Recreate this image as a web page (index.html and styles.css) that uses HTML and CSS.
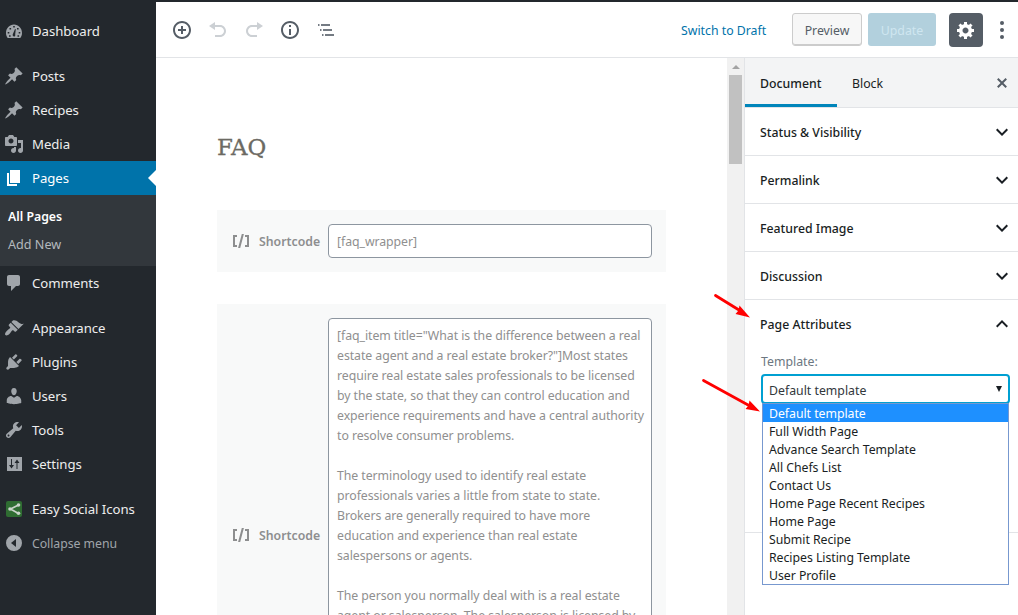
FILE: index.html
```html
<!DOCTYPE html>
<html lang="en">
<head>
<meta charset="utf-8">
<title>Edit Page</title>
<link rel="stylesheet" href="styles.css">
</head>
<body>
<div class="app">
  <nav class="menu">
    <a class="item"><svg class="icon" viewBox="0 0 20 20"><path fill-rule="evenodd" d="M3.76 17h12.48c1.1-1.37 1.76-3.11 1.76-5 0-4.9-3.58-8.5-8-8.5S2 7.100 2 12c0 1.890.66 3.630 1.760 5zM9.200 5h1.600v1.600H9.200zM5.500 7h1.600v1.600H5.500zM13 7h1.600v1.600H13zM3.700 11h1.600v1.600H3.700zM14.700 11h1.600v1.600h-1.600zM5 14.300h1.600v1.500H5zM13.500 14.300h1.600v1.500h-1.600zM11 8l.8.300-.6 5c.4 1.500-.3 2.300-1.200 2.300s-1.700-1.100-1.200-2.300z"/></svg><span>Dashboard</span></a>
    <a class="item gap"><svg class="icon" viewBox="0 0 20 20"><path d="M10.440 3.020l1.820-1.820 6.360 6.350-1.830 1.820c-1.050-.680-2.480-.570-3.410.360l-.750.750c-.920.930-1.040 2.350-.350 3.410l-1.830 1.820-2.410-2.410-2.800 2.790c-.420.420-3.380 2.710-3.800 2.290s1.860-3.390 2.280-3.810l2.790-2.790L4.100 9.360l1.830-1.820c1.050.690 2.480.570 3.400-.360l.750-.750c.930-.920 1.050-2.350.360-3.410z"/></svg><span>Posts</span></a>
    <a class="item"><svg class="icon" viewBox="0 0 20 20"><path d="M10.440 3.020l1.820-1.820 6.360 6.350-1.830 1.820c-1.050-.680-2.480-.570-3.410.360l-.750.750c-.920.930-1.040 2.350-.350 3.410l-1.830 1.820-2.410-2.410-2.800 2.790c-.420.420-3.380 2.710-3.800 2.290s1.860-3.390 2.280-3.810l2.790-2.790L4.100 9.360l1.830-1.820c1.050.690 2.480.570 3.400-.360l.750-.750c.930-.920 1.050-2.350.360-3.410z"/></svg><span>Recipes</span></a>
    <a class="item"><svg class="icon" viewBox="0 0 20 20"><path d="M13 11V4c0-.55-.45-1-1-1h-1.670L9 1H5L3.670 3H2c-.55 0-1 .45-1 1v7c0 .55.45 1 1 1h10c.55 0 1-.45 1-1zM7 4.500c1.380 0 2.500 1.120 2.500 2.500S8.380 9.500 7 9.500 4.500 8.380 4.500 7 5.620 4.500 7 4.500zM14 6h5v10.500c0 1.380-1.120 2.500-2.500 2.500S14 17.880 14 16.500s1.120-2.500 2.500-2.500c.17 0 .34.020.5.050V9h-3V6zm-4 8.050V13h2v3.500c0 1.380-1.120 2.500-2.500 2.500S7 17.880 7 16.500 8.120 14 9.500 14c.17 0 .34.020.5.050z"/></svg><span>Media</span></a>
    <a class="item current"><svg class="icon" viewBox="0 0 20 20"><path d="M6 15V2h10v13H6zm-1 1h8v2H3V5h2v11z"/></svg><span>Pages</span></a>
    <div class="submenu"><a class="on">All Pages</a><a>Add New</a></div>
    <a class="item"><svg class="icon" viewBox="0 0 20 20"><path d="M5 2h9c1.100 0 2 .9 2 2v7c0 1.100-.9 2-2 2h-2l-5 5v-5H5c-1.100 0-2-.9-2-2V4c0-1.100.9-2 2-2z"/></svg><span>Comments</span></a>
    <a class="item gap"><svg class="icon" viewBox="0 0 20 20"><path d="M14.480 11.060L7.410 3.990l1.500-1.500c.5-.56 2.300-.47 3.510.32 1.210.8 1.430 1.280 2.910 2.100 1.180.64 2.450 1.260 4.450.85zm-.71.71L6.700 4.700 4.930 6.470c-.39.39-.39 1.020 0 1.410l1.060 1.060c.39.39.39 1.030 0 1.420-.6.6-1.430 1.110-2.210 1.690-.35.26-.7.53-1.010.84C1.430 14.230.4 16.080 1.400 17.070c.99 1 2.840-.03 4.180-1.360.31-.31.58-.66.85-1.020.57-.78 1.080-1.610 1.690-2.210.39-.39 1.020-.39 1.410 0l1.060 1.060c.39.39 1.020.39 1.410 0z"/></svg><span>Appearance</span></a>
    <a class="item"><svg class="icon" viewBox="0 0 20 20"><path d="M13.110 4.360L9.870 7.600 8 5.730l3.240-3.240c.35-.34 1.050-.2 1.560.32.52.51.66 1.210.31 1.550zm-8 1.770l.91-1.120 9.010 9.010-1.190.84c-.71.71-2.630 1.160-3.820 1.160H6.140L4.900 17.260c-.59.59-1.540.59-2.120 0-.59-.58-.59-1.530 0-2.120l1.240-1.240v-3.880c0-1.130.4-3.190 1.090-3.890zm7.260 3.970l3.240-3.240c.34-.35 1.040-.21 1.550.31.52.51.66 1.210.31 1.550l-3.240 3.250z"/></svg><span>Plugins</span></a>
    <a class="item"><svg class="icon" viewBox="0 0 20 20"><path d="M10 9.250c-2.270 0-2.730-3.440-2.730-3.440C7 4.020 7.820 2 9.970 2c2.160 0 2.980 2.020 2.710 3.810 0 0-.41 3.440-2.680 3.440zm0 2.570L12.720 10c2.390 0 4.520 2.330 4.520 4.530v2.490s-3.650 1.130-7.240 1.130c-3.650 0-7.240-1.130-7.240-1.130v-2.490c0-2.250 1.940-4.480 4.470-4.480z"/></svg><span>Users</span></a>
    <a class="item"><svg class="icon" viewBox="0 0 20 20"><path d="M16.680 9.770c-1.340 1.340-3.300 1.670-4.950.99l-5.410 6.520c-.99.99-2.590.99-3.580 0s-.99-2.590 0-3.570l6.520-5.420c-.68-1.650-.35-3.610.99-4.950 1.280-1.280 3.120-1.620 4.720-1.060l-2.890 2.890 2.820 2.820 2.860-2.870c.53 1.580.18 3.390-1.080 4.650zM3.810 16.210c.4.39 1.040.39 1.430 0 .4-.4.4-1.040 0-1.430-.39-.4-1.030-.4-1.430 0-.39.39-.39 1.030 0 1.430z"/></svg><span>Tools</span></a>
    <a class="item"><svg class="icon" viewBox="0 0 20 20"><path fill-rule="evenodd" d="M3 3h15v14H3zM7 5h1v6h2l-2.500 3.500L5 11h2zM13 5.500L15.500 9h-2v6h-1V9h-2z"/></svg><span>Settings</span></a>
    <a class="item gap"><svg class="icon" viewBox="0 0 20 20"><rect x="2" y="2" width="16" height="16" rx="2" fill="#2f6d32"/><path d="M14.500 6L6.500 10l8 4.500" fill="none" stroke="#c9d3c9" stroke-width="1.700"/><circle cx="14.500" cy="6" r="1.800" fill="#c9d3c9"/><circle cx="6" cy="10" r="1.800" fill="#c9d3c9"/><circle cx="14.500" cy="14.300" r="1.800" fill="#c9d3c9"/></svg><span>Easy Social Icons</span></a>
    <a class="item collapse"><svg class="icon" viewBox="0 0 20 20"><path fill-rule="evenodd" d="M10 2a8 8 0 1 1 0 16 8 8 0 0 1 0-16zM12 6v8l-5-4z"/></svg><span>Collapse menu</span></a>
  </nav>

  <main class="main">
    <header class="bar">
      <div class="tools">
        <svg viewBox="0 0 20 20"><path d="M10 1c-5 0-9 4-9 9s4 9 9 9 9-4 9-9-4-9-9-9zm0 16c-3.900 0-7-3.100-7-7s3.100-7 7-7 7 3.100 7 7-3.100 7-7 7zm1-11H9v3H6v2h3v3h2v-3h3V9h-3V6z"/></svg>
        <svg class="off" viewBox="0 0 20 20"><path d="M12 5H7V2L1 6l6 4V7h5c2.200 0 4 1.800 4 4s-1.800 4-4 4H7v2h5c3.300 0 6-2.700 6-6s-2.700-6-6-6"/></svg>
        <svg class="off" viewBox="0 0 20 20"><path d="M8 5h5V2l6 4-6 4V7H8c-2.200 0-4 1.800-4 4s1.800 4 4 4h5v2H8c-3.300 0-6-2.700-6-6s2.700-6 6-6z"/></svg>
        <svg viewBox="0 0 20 20"><path d="M10 1c-5 0-9 4-9 9s4 9 9 9 9-4 9-9-4-9-9-9zm0 16c-3.900 0-7-3.100-7-7s3.100-7 7-7 7 3.100 7 7-3.100 7-7 7zM9 5h2v2H9zM9 9h2v6H9z"/></svg>
        <svg class="outline" viewBox="0 0 20 20"><path d="M2 4h1.500v2H2zM5 4h9v2H5zM4 9h1.500v2H4zM7 9h9v2H7zM6 14h1.500v2H6zM9 14h9v2H9z"/></svg>
      </div>
      <div class="actions">
        <a class="draft">Switch to Draft</a>
        <span class="btn preview">Preview</span>
        <span class="btn update">Update</span>
        <span class="gear"><svg viewBox="0 0 20 20"><path d="M18 12h-2.180c-.17.7-.44 1.350-.81 1.930l1.540 1.540-2.100 2.100-1.540-1.540c-.58.36-1.230.63-1.910.79V19H8v-2.180c-.68-.16-1.330-.43-1.910-.79l-1.540 1.540-2.120-2.120 1.540-1.540c-.36-.58-.63-1.230-.79-1.910H1V9.030h2.170c.16-.7.44-1.350.8-1.940L2.430 5.550l2.100-2.100 1.540 1.540c.58-.37 1.240-.64 1.930-.81V2h3v2.180c.68.16 1.330.43 1.910.79l1.540-1.540 2.120 2.120-1.540 1.540c.36.59.64 1.240.8 1.940H18V12zm-8.500 1.500c1.660 0 3-1.340 3-3s-1.340-3-3-3-3 1.340-3 3 1.340 3 3 3z"/></svg></span>
        <svg class="dots" viewBox="0 0 4 20"><circle cx="2" cy="3" r="2"/><circle cx="2" cy="10" r="2"/><circle cx="2" cy="17" r="2"/></svg>
      </div>
    </header>
    <div class="body">
      <section class="canvas">
        <h1 class="title">FAQ</h1>
        <div class="block">
          <div class="label"><svg viewBox="0 0 20 20"><path d="M6 14H4V6h2V4H2v12h4M7.100 17h2.100l3.700-14h-2.100M14 4v2h2v8h-2v2h4V4"/></svg><span>Shortcode</span></div>
          <div class="field"><div>[faq_wrapper]</div></div>
        </div>
        <div class="block tall">
          <div class="label"><svg viewBox="0 0 20 20"><path d="M6 14H4V6h2V4H2v12h4M7.100 17h2.100l3.700-14h-2.100M14 4v2h2v8h-2v2h4V4"/></svg><span>Shortcode</span></div>
          <div class="field">
            <div>[faq_item title="What is the difference between a real</div>
            <div>estate agent and a real estate broker?"]Most states</div>
            <div>require real estate sales professionals to be licensed</div>
            <div>by the state, so that they can control education and</div>
            <div>experience requirements and have a central authority</div>
            <div>to resolve consumer problems.</div>
            <div>&nbsp;</div>
            <div>The terminology used to identify real estate</div>
            <div>professionals varies a little from state to state.</div>
            <div>Brokers are generally required to have more</div>
            <div>education and experience than real estate</div>
            <div>salespersons or agents.</div>
            <div>&nbsp;</div>
            <div>The person you normally deal with is a real estate</div>
            <div>agent or salesperson. The salesperson is licensed by</div>
          </div>
        </div>
      </section>
      <div class="scroll"><i class="up"></i><i class="thumb"></i></div>
      <aside class="side">
        <div class="tabs"><span class="tab active">Document</span><span class="tab">Block</span><svg class="close" viewBox="0 0 20 20"><path d="M14.950 6.460L11.410 10l3.540 3.540-1.410 1.410L10 11.420l-3.530 3.530-1.420-1.420L8.580 10 5.050 6.470l1.420-1.420L10 8.580l3.540-3.530z"/></svg></div>
        <div class="panel"><span>Status &amp; Visibility</span><svg class="chev" viewBox="0 0 24 24"><path d="M7.410 8.590L12 13.170l4.590-4.580L18 10l-6 6-6-6z"/></svg></div>
        <div class="panel"><span>Permalink</span><svg class="chev" viewBox="0 0 24 24"><path d="M7.410 8.590L12 13.170l4.590-4.580L18 10l-6 6-6-6z"/></svg></div>
        <div class="panel"><span>Featured Image</span><svg class="chev" viewBox="0 0 24 24"><path d="M7.410 8.590L12 13.170l4.590-4.580L18 10l-6 6-6-6z"/></svg></div>
        <div class="panel"><span>Discussion</span><svg class="chev" viewBox="0 0 24 24"><path d="M7.410 8.590L12 13.170l4.590-4.580L18 10l-6 6-6-6z"/></svg></div>
        <div class="panel open"><span>Page Attributes</span><svg class="chev" viewBox="0 0 24 24"><path d="M7.410 15.410L12 10.830l4.590 4.580L18 14l-6-6-6 6z"/></svg></div>
        <div class="attrs">
          <div class="caption">Template:</div>
          <div class="select"><span>Default template</span><i class="arrow"></i>
            <div class="options">
              <div class="sel">Default template</div>
              <div>Full Width Page</div>
              <div>Advance Search Template</div>
              <div>All Chefs List</div>
              <div>Contact Us</div>
              <div>Home Page Recent Recipes</div>
              <div>Home Page</div>
              <div>Submit Recipe</div>
              <div>Recipes Listing Template</div>
              <div>User Profile</div>
            </div>
          </div>
        </div>
      </aside>
    </div>
  </main>
  <svg class="pointers" viewBox="0 0 1018 615"><g stroke="#f00" stroke-width="2.800" stroke-linecap="round"><path d="M715.500 295.500L739 310"/><path d="M703.500 380.500L749 405.500"/></g><path fill="#f00" d="M750 317.500L735.500 314l3-3.500 1-5zM760 411.500L745.500 409l3-3.500 1-5z"/></svg>
</div>
</body>
</html>
```
FILE: styles.css
```css
* { box-sizing: border-box; }
body { margin: 0; font-family: "Noto Sans", "Open Sans", sans-serif; font-size: 12.3px; color: #191e23; background: #fff; }
svg { fill: currentColor; flex: none; display: block; }
.app { position: relative; width: 1018px; height: 615px; display: flex; overflow: hidden; white-space: nowrap; }

/* Admin menu */
.menu { width: 156px; flex: none; background: #23282d; padding-top: 14px; display: flex; flex-direction: column; }
.item { height: 34px; flex: none; display: flex; align-items: center; gap: 8px; padding-left: 4px; color: #eee; font-size: 13.2px; letter-spacing: -0.05px; position: relative; }
.item .icon { width: 20px; height: 20px; color: #a0a5aa; }
.gap { margin-top: 11px; }
.current { background: #0073aa; color: #fff; }
.current .icon { color: #fff; }
.current::after { content: ""; position: absolute; right: 0; top: 9px; border: 8px solid transparent; border-right-color: #fff; border-left: 0; }
.submenu { background: #32373c; height: 71px; flex: none; padding: 8px 8px 6px; font-size: 12.3px; line-height: 28px; color: #b4b9be; display: flex; flex-direction: column; }
.submenu .on { color: #fff; font-weight: 600; }
.submenu a:last-child { font-size: 12.6px; }
.collapse { color: #a0a5aa; font-size: 12.3px; }

/* Editor header */
.main { flex: 1; min-width: 0; border-top: 2px solid #23282d; display: flex; flex-direction: column; }
.bar { height: 56px; flex: none; border-bottom: 1px solid #e2e4e7; display: flex; justify-content: space-between; align-items: center; padding: 0 14px 0 16px; }
.tools { display: flex; gap: 16px; color: #555d66; }
.tools svg { width: 20px; height: 20px; }
.tools .off { color: #ccd0d4; }
.tools .outline { color: #747b83; }
.actions { display: flex; align-items: center; }
.draft { color: #0073aa; width: 111px; padding-top: 2px; }
.btn { height: 33px; border-radius: 3px; display: flex; align-items: center; justify-content: center; padding-top: 2px; }
.preview { width: 70px; background: #f7f7f7; border: 1px solid #ccc; box-shadow: inset 0 -1px 0 #ccc; color: #555d66; margin-right: 6px; }
.update { width: 68px; background: #b2d0dd; color: #cfe6f0; margin-right: 13px; }
.gear { width: 34px; height: 34px; border-radius: 4px; background: #555d66; color: #fff; display: flex; align-items: center; justify-content: center; margin-right: 17px; }
.gear svg { width: 20px; height: 20px; }
.dots { width: 4px; height: 20px; color: #555d66; }

/* Canvas */
.body { flex: 1; min-height: 0; display: flex; }
.canvas { flex: 1; padding: 73px 61px 0; overflow: hidden; }
.title { margin: 0 0 46px; height: 33px; font: 400 22.900px/33px "DejaVu Serif", serif; color: #6c6a63; -webkit-text-stroke: 0.3px #6c6a63; }
.block { background: #f8f9f9; width: 449px; height: 62px; padding: 14px; display: flex; align-items: center; margin-bottom: 32px; color: #8d8e8f; }
.label { display: flex; align-items: center; gap: 8px; width: 97px; font-weight: 600; }
.label svg { width: 20px; height: 20px; }
.field { width: 324px; align-self: stretch; border: 1px solid #8d96a0; border-radius: 4px; background: #fff; padding: 7px 8px 5px; line-height: 20px; letter-spacing: -0.06px; color: #8f8f8f; }
.tall { height: 462px; }
.scroll { width: 17px; flex: none; background: #f1f1f1; display: flex; flex-direction: column; align-items: center; }
.up { border: 4px solid transparent; border-top: 0; border-bottom-color: #a3a3a3; margin: 7px 0 6px; }
.thumb { width: 13px; height: 89px; background: #c1c1c1; }

/* Settings sidebar */
.side { width: 274px; flex: none; border-left: 1px solid #e2e4e7; }
.tabs { height: 50px; background: #f3f4f5; border-bottom: 1px solid #e2e4e7; display: flex; align-items: stretch; }
.tab { padding: 2px 15px 0; display: flex; align-items: center; }
.active { width: 92px; font-weight: 500; border-bottom: 3px solid #0085ba; padding-top: 5px; }
.close { width: 20px; height: 20px; align-self: center; margin: 0 6px 0 auto; color: #555d66; }
.panel { height: 48px; border-bottom: 1px solid #e2e4e7; padding: 0 4px 0 15px; display: flex; justify-content: space-between; align-items: center; font-weight: 500; }
.panel span { padding-top: 2px; }
.panel .chev { width: 24px; height: 24px; }
.open { border-bottom-color: transparent; }
.attrs { height: 185px; border-bottom: 1px solid #e2e4e7; padding: 4px 8px 0 16px; }
.caption { color: #6c7781; height: 22px; line-height: 20px; }
.select { position: relative; height: 30px; border: 2px solid #00a0d2; border-radius: 4px; display: flex; align-items: center; justify-content: space-between; padding: 1px 6px 0; color: #32373c; }
.select > span { padding-top: 2px; }
.arrow { border: 3px solid transparent; border-top: 6px solid #191e23; border-bottom: 0; margin-bottom: 2px; }
.options { position: absolute; left: -1px; top: 27px; width: 247px; height: 182px; background: #fff; border: 1px solid #7798cf; line-height: 20px; letter-spacing: -0.04px; color: #191e23; }
.options div { height: 18px; padding-left: 6px; }
.options .sel { background: #1e90ff; color: #fff; }

.pointers { position: absolute; left: 0; top: 0; width: 1018px; height: 615px; pointer-events: none; }
```
